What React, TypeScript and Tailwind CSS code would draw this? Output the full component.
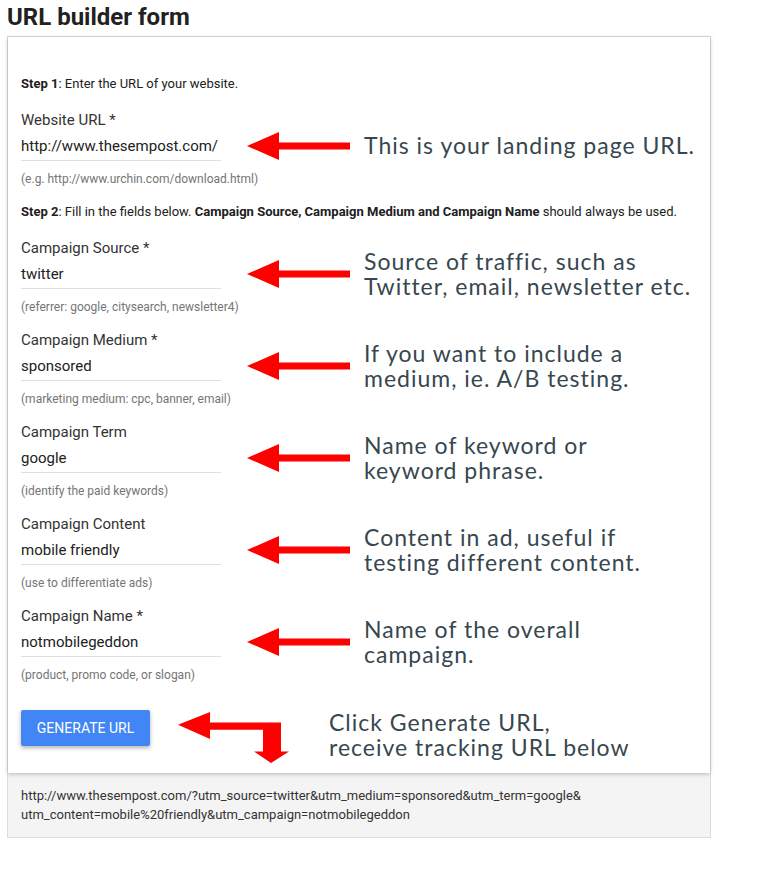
import React from "react";

type Field = {
  label: string;
  value: string;
  hint: string;
  note: string[];
};

const FIRST: Field = {
  label: "Website URL *",
  value: "http://www.thesempost.com/",
  hint: "(e.g. http://www.urchin.com/download.html)",
  note: ["This is your landing page URL."],
};

const CAMPAIGN_FIELDS: Field[] = [
  {
    label: "Campaign Source *",
    value: "twitter",
    hint: "(referrer: google, citysearch, newsletter4)",
    note: ["Source of traffic, such as", "Twitter, email, newsletter etc."],
  },
  {
    label: "Campaign Medium *",
    value: "sponsored",
    hint: "(marketing medium: cpc, banner, email)",
    note: ["If you want to include a", "medium, ie. A/B testing."],
  },
  {
    label: "Campaign Term",
    value: "google",
    hint: "(identify the paid keywords)",
    note: ["Name of keyword or", "keyword phrase."],
  },
  {
    label: "Campaign Content",
    value: "mobile friendly",
    hint: "(use to differentiate ads)",
    note: ["Content in ad, useful if", "testing different content."],
  },
  {
    label: "Campaign Name *",
    value: "notmobilegeddon",
    hint: "(product, promo code, or slogan)",
    note: ["Name of the overall", "campaign."],
  },
];

const NOTE_FONT = "font-['Lato',sans-serif] text-[23px] leading-[25px] tracking-[1px] text-[#37474f] whitespace-nowrap";

function LeftArrow() {
  return (
    <svg width="103" height="28" viewBox="0 0 103 28" className="shrink-0 ml-[26px]">
      <polygon points="0,14 32,0 32,10.5 103,10.5 103,17.5 32,17.5 32,28" fill="#ff0000" />
    </svg>
  );
}

function BendArrow() {
  return (
    <svg width="111" height="51" viewBox="0 0 111 51" className="shrink-0 ml-[28px] mt-[2px]">
      <polygon
        points="0,12.7 32,0 32,10.4 103,10.4 103,39.4 111,39.4 93,51 76,39.4 85,39.4 85,17.7 32,17.7 32,27"
        fill="#ff0000"
      />
    </svg>
  );
}

function FieldBlock({ field }: { field: Field }) {
  return (
    <div>
      <div className="text-[15px] leading-[20px] text-[#333333]">{field.label}</div>
      <div className="flex items-center h-[31px]">
        <div className="w-[200px] h-full shrink-0 border-b border-[#e0e0e0] flex items-center pt-[2px] text-[15px] text-[#212121]">
          {field.value}
        </div>
        <LeftArrow />
        <div className={`ml-[14px] ${NOTE_FONT}`}>
          {field.note.map((line) => (
            <div key={line}>{line}</div>
          ))}
        </div>
      </div>
      <div className="mt-[10px] text-[12px] leading-[16px] text-[#757575]">{field.hint}</div>
    </div>
  );
}

export default function App() {
  return (
    <div className="min-h-screen bg-white font-['Roboto',sans-serif] pb-[41px]">
      <h1 className="px-[7px] pt-[3px] mb-[5px] text-[24px] leading-[28px] font-bold text-[#212121]">
        URL builder form
      </h1>

      <div className="ml-[7px] w-[704px] border border-[#dddddd]">
        <div className="relative z-10 bg-white px-[13px] pt-[39px] pb-[27px] shadow-[0_1px_4px_rgba(0,0,0,0.25)]">
          <p className="text-[13px] leading-[16px] text-[#212121]">
            <span className="font-bold">Step 1</span>: Enter the URL of your website.
          </p>

          <div className="mt-[18px]">
            <FieldBlock field={FIRST} />
          </div>

          <p className="mt-[17px] text-[13px] leading-[16px] text-[#212121]">
            <span className="font-bold">Step 2</span>: Fill in the fields below.{" "}
            <span className="font-bold">Campaign Source, Campaign Medium and Campaign Name</span> should always be
            used.
          </p>

          <div className="mt-[18px] flex flex-col gap-[15px]">
            {CAMPAIGN_FIELDS.map((f) => (
              <FieldBlock key={f.label} field={f} />
            ))}
          </div>

          <div className="mt-[27px] flex items-start h-[36px]">
            <button className="h-[36px] w-[129px] shrink-0 rounded-[2px] bg-[#4285f4] text-[14px] text-white shadow-[0_2px_4px_rgba(0,0,0,0.3)]">
              GENERATE URL
            </button>
            <BendArrow />
            <div className={`ml-[40px] ${NOTE_FONT}`}>
              <div>Click Generate URL,</div>
              <div>receive tracking URL below</div>
            </div>
          </div>
        </div>

        <div className="bg-[#f4f4f4] px-[13px] pt-[13px] pb-[13px] text-[13px] leading-[19px] text-[#333333]">
          http://www.thesempost.com/?utm_source=twitter&amp;utm_medium=sponsored&amp;utm_term=google&amp;
          <br />
          utm_content=mobile%20friendly&amp;utm_campaign=notmobilegeddon
        </div>
      </div>
    </div>
  );
}
